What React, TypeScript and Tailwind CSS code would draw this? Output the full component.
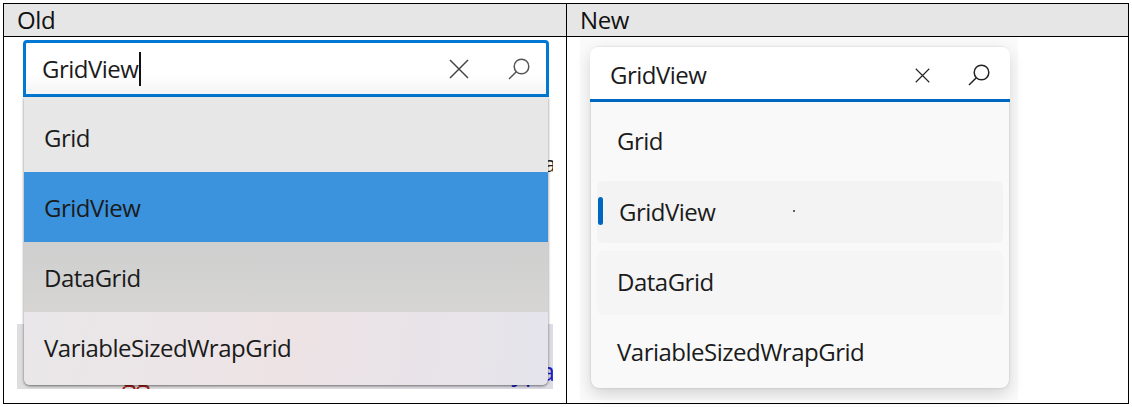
import React from 'react';

const font = "font-['Open_Sans',sans-serif]";

function CloseIcon({ className }: { className: string }) {
  return (
    <svg viewBox="0 0 20 20" className={className} fill="none" stroke="currentColor" strokeWidth="1.5">
      <path d="M1 1 L19 19 M19 1 L1 19" />
    </svg>
  );
}

function SearchIcon({ className }: { className: string }) {
  return (
    <svg viewBox="0 0 22 22" className={className} fill="none" stroke="currentColor" strokeWidth="1.5">
      <circle cx="13.5" cy="8.5" r="7.3" />
      <path d="M8.3 13.7 L1 21" />
    </svg>
  );
}

function OldPanel() {
  return (
    <div className="relative h-full">
      {/* page behind the popup */}
      <div className="absolute bottom-[14px] left-[13px] top-0 w-[536px] overflow-hidden">
        <span className="absolute right-[-3px] top-[114px] text-[22px] leading-6 text-[#222]">a</span>
        <div className="absolute inset-x-0 bottom-0 h-[65px] overflow-hidden bg-[linear-gradient(90deg,#dedede,#e4e0e2,#dddde6)]">
          <span className="absolute left-[105px] top-[37px] text-[26px] leading-8 text-[#a01c1c]">gg</span>
          <span className="absolute right-[-2px] top-[31px] text-[26px] leading-8 text-[#1c1cc8]">ypa</span>
        </div>
      </div>
      <div className="relative flex h-full flex-col pb-[18px] pl-[19px] pr-[17px] pt-[3px]">
        <div className="flex h-[57px] shrink-0 items-center rounded-t-[4px] border-[3px] border-[#0078d4] bg-[linear-gradient(#fff_60%,#f4f4f4)] pl-[16px] pr-[16px] text-[24px] text-[#1b1b1b]">
          <span className="tracking-[-0.5px]">GridView</span>
          <span className="ml-[1px] h-[34px] w-[2px] bg-[#111]" />
          <CloseIcon className="ml-auto h-[20px] w-[20px] text-[#444]" />
          <SearchIcon className="ml-[39px] h-[22px] w-[22px] text-[#555]" />
        </div>
        <div className="mx-[1px] flex min-h-0 flex-1 flex-col overflow-hidden rounded-b-[6px] text-[24px] tracking-[-0.5px] text-[#1b1b1b] shadow-[0_1px_3px_rgba(0,0,0,0.55)]">
          <div className="flex h-[75px] items-center bg-[#e7e7e7] pl-[20px] pt-[6px]">Grid</div>
          <div className="flex h-[70px] items-center bg-[#3a93dc] pl-[20px] pt-[2px]">GridView</div>
          <div className="flex h-[70px] items-center bg-[linear-gradient(#cfcfcf,#d6d5d4)] pl-[20px] pt-[2px]">DataGrid</div>
          <div className="flex flex-1 items-center bg-[linear-gradient(100deg,#e9e7e9,#ede3e5,#e5e4ec)] pb-[2px] pl-[20px]">VariableSizedWrapGrid</div>
        </div>
      </div>
    </div>
  );
}

function NewPanel() {
  return (
    <div className="ml-[13px] h-[363px] w-[438px] bg-[#fafafa] pl-[11px] pr-[9px] pt-[10px]">
      <div className="flex h-[341px] flex-col rounded-[8px] bg-[#f9f9f9] shadow-[0_6px_16px_rgba(0,0,0,0.16),0_0_2px_rgba(0,0,0,0.2)]">
        <div className="-mx-[1px] flex h-[55px] shrink-0 items-center rounded-t-[8px] border-b-[3px] border-[#0067c0] bg-white pl-[20px] pr-[20px] pt-[4px] text-[24px] tracking-[-0.5px] text-[#1b1b1b]">
          <span>GridView</span>
          <CloseIcon className="ml-auto h-[15px] w-[15px] text-[#222]" />
          <SearchIcon className="ml-[38px] h-[22px] w-[22px] text-[#222]" />
        </div>
        <div className="flex flex-1 flex-col px-[6px] pt-[7px] text-[24px] tracking-[-0.5px] text-[#1b1b1b]">
          <div className="flex h-[72px] items-center pb-[8px] pl-[20px]">Grid</div>
          <div className="relative flex h-[62px] items-center rounded-[6px] bg-[#f3f3f3] pl-[22px]">
            <span className="absolute left-[1px] top-[16px] h-[28px] w-[5px] rounded-full bg-[#0067c0]" />
            GridView
            <span className="absolute left-[196px] top-[29px] h-[2px] w-[2px] rounded-full bg-[#333]" />
          </div>
          <div className="mt-[8px] flex h-[64px] items-center rounded-[6px] bg-[#f5f5f5] pb-[2px] pl-[20px]">DataGrid</div>
          <div className="flex h-[72px] items-center pt-[2px] pl-[20px]">VariableSizedWrapGrid</div>
        </div>
      </div>
    </div>
  );
}

export default function App() {
  return (
    <div className={`h-[407px] w-[1132px] overflow-hidden bg-white p-[3px] ${font}`}>
      <div className="grid h-[401px] w-[1126px] grid-cols-[563px_1fr] grid-rows-[33px_1fr] border border-black">
        <div className="flex items-center border-b border-r border-black bg-[#e6e6e6] pl-[13px] text-[24px] tracking-[-0.4px] text-[#111]">Old</div>
        <div className="flex items-center border-b border-black bg-[#e6e6e6] pl-[13px] text-[24px] tracking-[-0.4px] text-[#111]">New</div>
        <div className="min-h-0 border-r border-black">
          <OldPanel />
        </div>
        <div className="min-h-0">
          <NewPanel />
        </div>
      </div>
    </div>
  );
}
